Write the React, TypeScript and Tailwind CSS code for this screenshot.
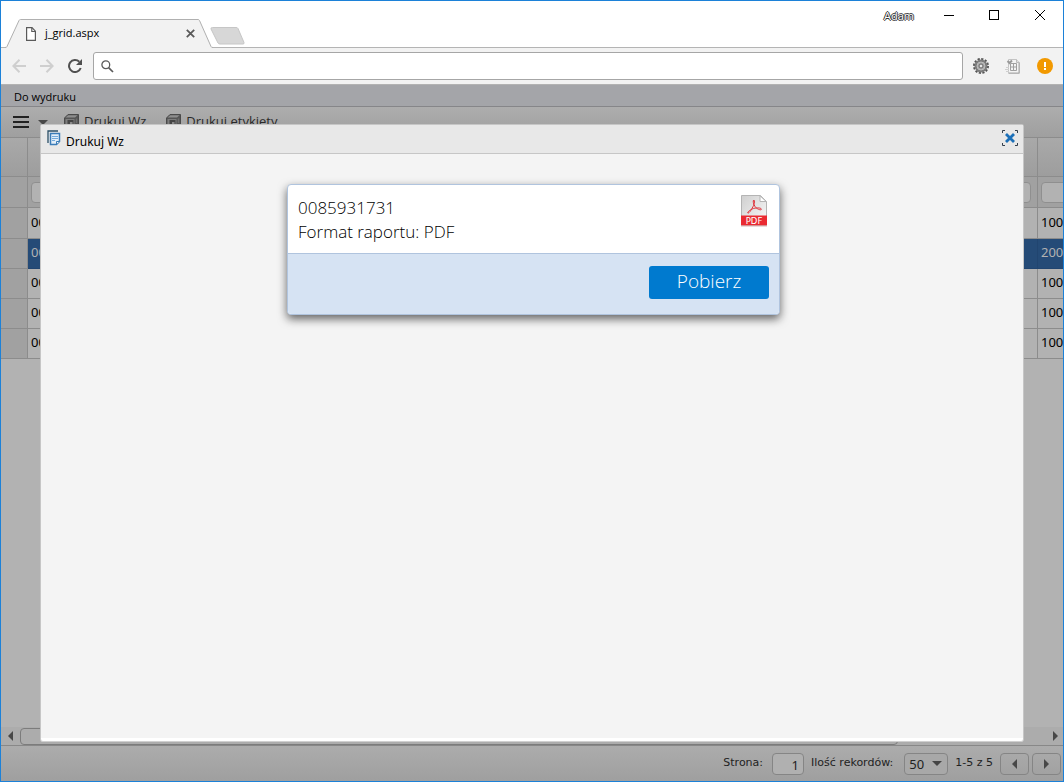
import { useState } from "react";
import { clsx } from "clsx";

const rows = [
  { id: 1, doc: "0085931730", code: "100" },
  { id: 2, doc: "0085931731", code: "200" },
  { id: 3, doc: "0085931732", code: "100" },
  { id: 4, doc: "0085931733", code: "100" },
  { id: 5, doc: "0085931734", code: "100" },
];

export default function App() {
  const [open, setOpen] = useState(true);

  return (
    <div className="h-screen flex flex-col overflow-hidden border border-[#1c81d8] bg-white font-['Noto_Sans',sans-serif] text-xs text-black">
      <TabStrip />
      <AddressBar />

      <main className="relative flex-1 min-h-0 flex flex-col bg-[#b2b2b2]">
        <h1 className="h-[22px] shrink-0 border-b border-[#868689] bg-[#a4a5a9] px-[13px] pt-px font-['Open_Sans',sans-serif] text-[11px] leading-[22px]">
          Do wydruku
        </h1>

        <GridToolbar onPrint={() => setOpen(true)} />
        <Grid selected={2} />

        <div className="flex-1" />
        <GridScrollbar />
        <Pager />

        {open && <PrintDialog onClose={() => setOpen(false)} />}
      </main>
    </div>
  );
}

/* BROWSER CHROME */

function TabStrip() {
  return (
    <header className="relative h-[47px] shrink-0 flex items-end border-b border-[#b4b4b4]">
      <div className="relative z-10 -mb-px ml-1 w-[208px] h-[29px] flex items-center pl-[21px] pr-[18px]">
        <svg
          className="absolute inset-0"
          width="208"
          height="29"
          viewBox="0 0 208 29"
          fill="none"
        >
          <path d="M1 29 L14 1.500 Q14.500 .5 15.500 .5 H193 Q194 .5 194.500 1.500 L207 29 Z" fill="#f2f2f2" />
          <path
            d="M0 28.500 Q1.500 28.500 2 27.500 L14 1.500 Q14.500 .5 15.500 .5 H193 Q194 .5 194.500 1.500 L206 27.500 Q206.500 28.500 208 28.500"
            stroke="#b0b0b0"
          />
        </svg>
        <svg className="relative" width="10" height="14" viewBox="0 0 10 14" fill="none">
          <path d="M.6 .6 H6 L9.400 4.200 V13.400 H.6 Z" fill="#fff" stroke="#5a5a5a" strokeWidth="1.200" />
          <path d="M5.800 .8 V4.500 H9.300" stroke="#5a5a5a" strokeWidth="1.200" />
        </svg>
        <span className="relative ml-[9px] flex-1 font-['Open_Sans',sans-serif] text-[11px]">
          j_grid.aspx
        </span>
        <button aria-label="Zamknij kartę" className="relative">
          <svg width="9" height="9" viewBox="0 0 9 9" stroke="#5a5a5a" strokeWidth="1.800">
            <path d="M.8 .8 L8.200 8.200 M8.200 .8 L.8 8.200" />
          </svg>
        </button>
      </div>

      <button aria-label="Nowa karta" className="-ml-[3px] mb-[2px]">
        <svg width="35" height="18" viewBox="0 0 35 18">
          <path
            d="M2.500 .5 H26 Q27.500 .5 28 1.500 L34 15.500 Q34.500 17 33 17 H10 Q8.500 17 8 16 L1 2 Q.5 .5 2.500 .5 Z"
            fill="#d7d7d7"
            stroke="#c6c6c6"
          />
        </svg>
      </button>

      <div className="ml-auto self-start flex items-center h-7 pr-[18px]">
        <button className="mr-[30px] mt-[2px] text-[11px] font-['Open_Sans',sans-serif] text-white [text-shadow:1px_0_0_#333,-1px_0_0_#333,0_1px_0_#333,0_-1px_0_#333]">
          Adam
        </button>
        <button aria-label="Minimalizuj" className="mr-[35px]">
          <svg width="10" height="10" viewBox="0 0 10 10" stroke="#000">
            <path d="M0 5.500 H10" />
          </svg>
        </button>
        <button aria-label="Maksymalizuj" className="mr-9">
          <svg width="10" height="10" viewBox="0 0 10 10" fill="none" stroke="#000">
            <rect x=".5" y=".5" width="9" height="9" />
          </svg>
        </button>
        <button aria-label="Zamknij okno">
          <svg width="10" height="10" viewBox="0 0 10 10" stroke="#000">
            <path d="M0 0 L10 10 M10 0 L0 10" />
          </svg>
        </button>
      </div>
    </header>
  );
}

function AddressBar() {
  return (
    <nav className="h-[37px] shrink-0 flex items-center border-b border-[#b2b2b2] bg-[#f2f2f2] pl-[11px] pr-[10px]">
      <button aria-label="Wstecz" className="mr-[14px]">
        <svg width="14" height="14" viewBox="0 0 14 14" fill="none" stroke="#cfcfcf" strokeWidth="2">
          <path d="M14 7 H1.500 M7.500 .8 L1.400 7 L7.500 13.200" />
        </svg>
      </button>
      <button aria-label="Dalej" className="mr-[14px]">
        <svg width="14" height="14" viewBox="0 0 14 14" fill="none" stroke="#cfcfcf" strokeWidth="2">
          <path d="M0 7 H12.500 M6.500 .8 L12.600 7 L6.500 13.200" />
        </svg>
      </button>
      <button aria-label="Odśwież" className="mr-[11px]">
        <svg width="14" height="14" viewBox="0 0 14 14" fill="none">
          <path d="M12.700 9 A6 6 0 1 1 11.300 2.800" stroke="#505050" strokeWidth="2" />
          <path d="M14 0 V6 H8 Z" fill="#505050" />
        </svg>
      </button>

      <label className="flex-1 h-7 flex items-center rounded-[3px] border border-[#a6a6a6] bg-white pl-[7px]">
        <svg width="13" height="13" viewBox="0 0 13 13" fill="none" stroke="#5a5a5a">
          <circle cx="4.800" cy="4.800" r="3.900" strokeWidth="1.300" />
          <path d="M7.600 7.600 L12 12" strokeWidth="1.700" />
        </svg>
        <input aria-label="Adres" className="flex-1 px-2 outline-none" />
      </label>

      <button aria-label="Ustawienia" className="ml-[10px]">
        <svg width="16" height="16" viewBox="0 0 16 16" fill="none">
          <circle cx="8" cy="8" r="7" stroke="#555" strokeWidth="2" strokeDasharray="2.200 1.465" />
          <circle cx="8" cy="8" r="6.500" fill="#7c7c7c" />
          <circle cx="8" cy="8" r="4" fill="#a8a8a8" stroke="#bdbdbd" />
          <circle cx="8" cy="8" r="2" fill="#e6e6e6" stroke="#666" />
        </svg>
      </button>
      <button aria-label="Arkusz" className="ml-4">
        <svg width="16" height="16" viewBox="0 0 16 16" fill="none">
          <path d="M3.500 1.500 H11.500 L14.500 4.500 V15.500 H3.500 Z" fill="#f4f4f4" stroke="#c4c4c4" />
          <path d="M14 5 V15 H4" stroke="#a8a8a8" />
          <path d="M11.500 1.500 V4.500 H14.500" fill="#e0e0e0" stroke="#bcbcbc" />
          <path d="M5.500 5.500 H11.500 V12.500 H5.500 Z M8.500 5.500 V12.500 M5.500 9 H11.500" stroke="#a0a0a0" />
          <path d="M2.500 3 L4.500 5 L7 2.500" stroke="#999" strokeWidth="2" />
          <path d="M1 9.500 H4 M0 11.500 H4 M1 13.500 H4" stroke="#cfcfcf" />
        </svg>
      </button>
      <button aria-label="Powiadomienie" className="ml-4">
        <svg width="16" height="16" viewBox="0 0 16 16">
          <circle cx="8" cy="8" r="8" fill="#f29900" />
          <path d="M7 4 H9 V9 H7 Z M7 10 H9 V12 H7 Z" fill="#fff" />
        </svg>
      </button>
    </nav>
  );
}

/* GRID */

function GridToolbar({ onPrint }: any) {
  return (
    <div className="h-[30px] shrink-0 flex items-center bg-linear-to-b from-[#adadad] to-[#9f9f9f] pl-3 font-['Open_Sans',sans-serif] text-[13px] text-[#2a2a2a]">
      <button aria-label="Menu" className="flex items-center mr-[16px]">
        <svg width="16" height="12" viewBox="0 0 16 12" fill="#222">
          <path d="M0 0 H16 V2 H0 Z M0 5 H16 V7 H0 Z M0 10 H16 V12 H0 Z" />
        </svg>
        <svg className="ml-[9px]" width="10" height="5" viewBox="0 0 10 5" fill="#484848">
          <path d="M0 0 H10 L5 5 Z" />
        </svg>
      </button>
      <button className="flex items-center mr-5" onClick={onPrint}>
        <PrintIcon />
        Drukuj Wz
      </button>
      <button className="flex items-center">
        <PrintIcon />
        Drukuj etykiety
      </button>
    </div>
  );
}

function PrintIcon() {
  return (
    <svg className="mr-[5px]" width="15" height="15" viewBox="0 0 15 15" fill="none">
      <path d="M.5 4 L4 .5 H14.500 V10 L11 14 H.5 Z" fill="#555" stroke="#4a4a4a" />
      <path d="M1.500 3.500 L4.300 1.200 H13.500 L11 3.500 Z" fill="#8e8e8e" />
      <path d="M1.500 5 H10.500 V13 H1.500 Z" fill="#7d7d7d" />
      <path d="M3.500 6 H9.500 V11 H3.500 Z" fill="#454545" />
      <path d="M6 8 H8.500 V11 H6 Z" fill="#8a8a8a" />
      <path d="M12.500 4.500 V9" stroke="#6e6e6e" strokeWidth="1.500" />
    </svg>
  );
}

function Grid({ selected }: { selected: number }) {
  return (
    <table className="w-full table-fixed border-separate border-spacing-0 border-t border-[#8c8c8c]">
      <colgroup>
        <col className="w-[27px]" />
        <col />
        <col className="w-[25px]" />
      </colgroup>
      <thead>
        <tr className="h-[39px] bg-linear-to-b from-[#a9a9a9] to-[#9d9d9d]">
          <th className="border-r border-b border-[#8c8c8c]" />
          <th className="border-r border-b border-[#8c8c8c]" />
          <th className="border-b border-[#8c8c8c]" />
        </tr>
        <tr className="h-[31px] bg-[#a1a1a1]">
          <td className="border-r border-b border-[#8c8c8c]" />
          <td className="border-r border-b border-[#8c8c8c] py-0 pl-[3px] pr-[6px]">
            <input
              aria-label="Filtr dokumentu"
              className="block w-full h-[21px] rounded border border-[#8f8f8f] bg-[#b2b2b2] px-1"
            />
          </td>
          <td className="overflow-hidden border-b border-[#8c8c8c] py-0 pl-[3px] pr-0">
            <input
              aria-label="Filtr kodu"
              className="block w-10 h-[21px] rounded border border-[#8f8f8f] bg-[#b2b2b2] px-1"
            />
          </td>
        </tr>
      </thead>
      <tbody>
        {rows.map((r) => (
          <tr
            key={r.id}
            className={clsx(
              "h-[30px] first:h-[31px] text-[13px] leading-4",
              r.id === selected && "bg-[#254b77] text-[#b2b2b2]",
            )}
          >
            <td className="border-r border-b border-[#8c8c8c] bg-[#a1a1a1]" />
            <td
              className={clsx(
                "border-r border-b pt-0 pb-[3px] pl-[3px] pr-0",
                r.id === selected ? "border-[#214570]" : "border-[#8c8c8c]",
              )}
            >
              {r.doc}
            </td>
            <td
              className={clsx(
                "border-b pt-0 pb-[3px] pl-[3px] pr-0",
                r.id === selected ? "border-[#214570]" : "border-[#8c8c8c]",
              )}
            >
              {r.code}
            </td>
          </tr>
        ))}
      </tbody>
    </table>
  );
}

function GridScrollbar() {
  return (
    <div className="h-[18px] shrink-0 flex items-center justify-between bg-[#acacac] pl-[7px] pr-[5px]">
      <button aria-label="Przewiń w lewo">
        <Triangle left />
      </button>
      <div className="flex-1 ml-[7px] mr-[155px] h-[17px] rounded border border-[#7c7c7c] bg-[#acacac]" />
      <button aria-label="Przewiń w prawo">
        <Triangle />
      </button>
    </div>
  );
}

function Pager() {
  return (
    <footer className="h-9 shrink-0 flex items-center justify-end border-t border-[#888] bg-linear-to-b from-[#acacac] to-[#9f9f9f] pr-[2px] font-['DejaVu_Sans',sans-serif] text-[11px] text-[#222]">
      <label htmlFor="page">Strona:</label>
      <input
        id="page"
        defaultValue="1"
        className="ml-[9px] w-8 h-[22px] rounded border border-[#858585] bg-[#b0b0b0] px-1 pt-[2px] text-right text-[13px] font-['Noto_Sans',sans-serif]"
      />
      <label htmlFor="size" className="ml-[7px]">
        Ilość rekordów:
      </label>
      <div className="relative ml-[11px]">
        <select
          id="size"
          defaultValue="50"
          className="block w-11 h-[22px] appearance-none rounded border border-[#858585] bg-[#a8a8a8] pl-1 pt-[2px] text-[13px] font-['Noto_Sans',sans-serif]"
        >
          <option>20</option>
          <option>50</option>
        </select>
        <svg
          className="absolute right-[6px] top-2 pointer-events-none"
          width="10"
          height="5"
          viewBox="0 0 10 5"
          fill="#444"
        >
          <path d="M0 0 H10 L5 5 Z" />
        </svg>
      </div>
      <span className="mx-[7px]">1-5 z 5</span>
      <button
        aria-label="Poprzednia strona"
        className="w-[29px] h-[22px] flex items-center justify-center rounded border border-[#858585]"
      >
        <Triangle left />
      </button>
      <button
        aria-label="Następna strona"
        className="ml-[3px] w-[29px] h-[22px] flex items-center justify-center rounded border border-[#858585]"
      >
        <Triangle />
      </button>
    </footer>
  );
}

function Triangle({ left }: { left?: boolean }) {
  return (
    <svg width="5" height="10" viewBox="0 0 5 10" fill="#484848">
      <path d={left ? "M5 0 V10 L0 5 Z" : "M0 0 V10 L5 5 Z"} />
    </svg>
  );
}

/* PRINT DIALOG */

function PrintDialog({ onClose }: any) {
  return (
    <section
      role="dialog"
      aria-labelledby="print-title"
      className="absolute inset-x-[39px] top-[39px] bottom-[39px] flex flex-col rounded-[3px] border border-[#c6c6c6] border-b-[#d0d0d0] bg-white pb-[3px]"
    >
      <div className="h-[29px] shrink-0 flex items-center border-b border-[#c6c6c6] bg-[#e8e8e8] pl-[6px] pr-[5px]">
        <svg className="mb-[2px]" width="14" height="16" viewBox="0 0 14 16" fill="none">
          <path d="M1 13 V1 H11" stroke="#2c5068" strokeWidth="1.300" />
          <path
            d="M3.500 3.500 H12.500 V11.500 L9.500 14.500 H3.500 Z"
            fill="#e2eef9"
            stroke="#3a7cb8"
            strokeWidth="1.500"
          />
          <path d="M5 6.500 H11 M5 8.500 H11 M5 10.500 H8" stroke="#72a9da" />
          <path d="M9.500 14 V11.500 H12.500" fill="#fff" stroke="#3a7cb8" />
        </svg>
        <h2 id="print-title" className="ml-[5px] mt-[6px]">
          Drukuj Wz
        </h2>
        <button aria-label="Zamknij" className="ml-auto mb-[2px]" onClick={onClose}>
          <svg width="16" height="16" viewBox="0 0 16 16" fill="none">
            <path
              d="M.5 3 V.5 H3 M13 .5 H15.500 V3 M15.500 13 V15.500 H13 M3 15.500 H.5 V13"
              stroke="#333f4c"
            />
            <path d="M4 4 L12 12 M12 4 L4 12" stroke="#1b6fb8" strokeWidth="2.800" />
          </svg>
        </button>
      </div>

      <div className="flex-1 bg-[#f4f4f4] pt-[30px] pl-[3px]">
        <ReportCard />
      </div>
    </section>
  );
}

function ReportCard() {
  return (
    <article className="mx-auto w-[493px] rounded border border-[#b0c4de] bg-white shadow-[0_4px_10px_rgba(0,0,0,0.6)] font-['Open_Sans',sans-serif] font-light">
      <div className="h-[68px] flex justify-between pt-[10px] pl-[10px] pr-3">
        <div className="pt-px text-[17px] leading-6 text-black">
          <p>0085931731</p>
          <p>Format raportu: PDF</p>
        </div>
        <PdfIcon />
      </div>
      <div className="h-[61px] flex justify-end rounded-b border-t border-[#b0c4de] bg-[#d6e3f3] pt-3 pr-[10px]">
        <button className="w-[120px] h-[33px] rounded-[3px] bg-[#007acf] pb-[2px] text-[19px] text-white">
          Pobierz
        </button>
      </div>
    </article>
  );
}

function PdfIcon() {
  return (
    <svg width="26" height="32" viewBox="0 0 26 32" fill="none">
      <defs>
        <linearGradient id="paper" x1="0" y1="0" x2="1" y2="1">
          <stop offset="0" stopColor="#cfcfcf" />
          <stop offset="1" stopColor="#fafafa" />
        </linearGradient>
      </defs>
      <path d="M.5 .5 H19.500 L25.500 6.500 V30.500 H.5 Z" fill="url(#paper)" stroke="#b4b4b4" />
      <path d="M19 .8 V6.500 H25.200 Z" fill="#fff" stroke="#b4b4b4" />
      <path
        d="M12.800 5 C11.500 5.500 12.500 9 14 11.500 C15.500 13.800 19.500 15.500 20.300 14.500 C21 13 16.500 12.300 12.500 13.500 C9.500 14.500 6.200 17 6.800 18 C8 18.800 11.300 13.500 12.500 10.500 C13.500 8 14 5.300 12.800 5 Z"
        stroke="#e03038"
      />
      <path d="M0 20.500 H26 V30.500 H0 Z" fill="#ea2a32" />
      <path d="M0 31 H26" stroke="#d8b4b4" />
      <text
        x="13"
        y="28.500"
        textAnchor="middle"
        fill="#fff"
        fontFamily="DejaVu Sans"
        fontWeight="normal"
        fontSize="8.500"
      >
        PDF
      </text>
    </svg>
  );
}
